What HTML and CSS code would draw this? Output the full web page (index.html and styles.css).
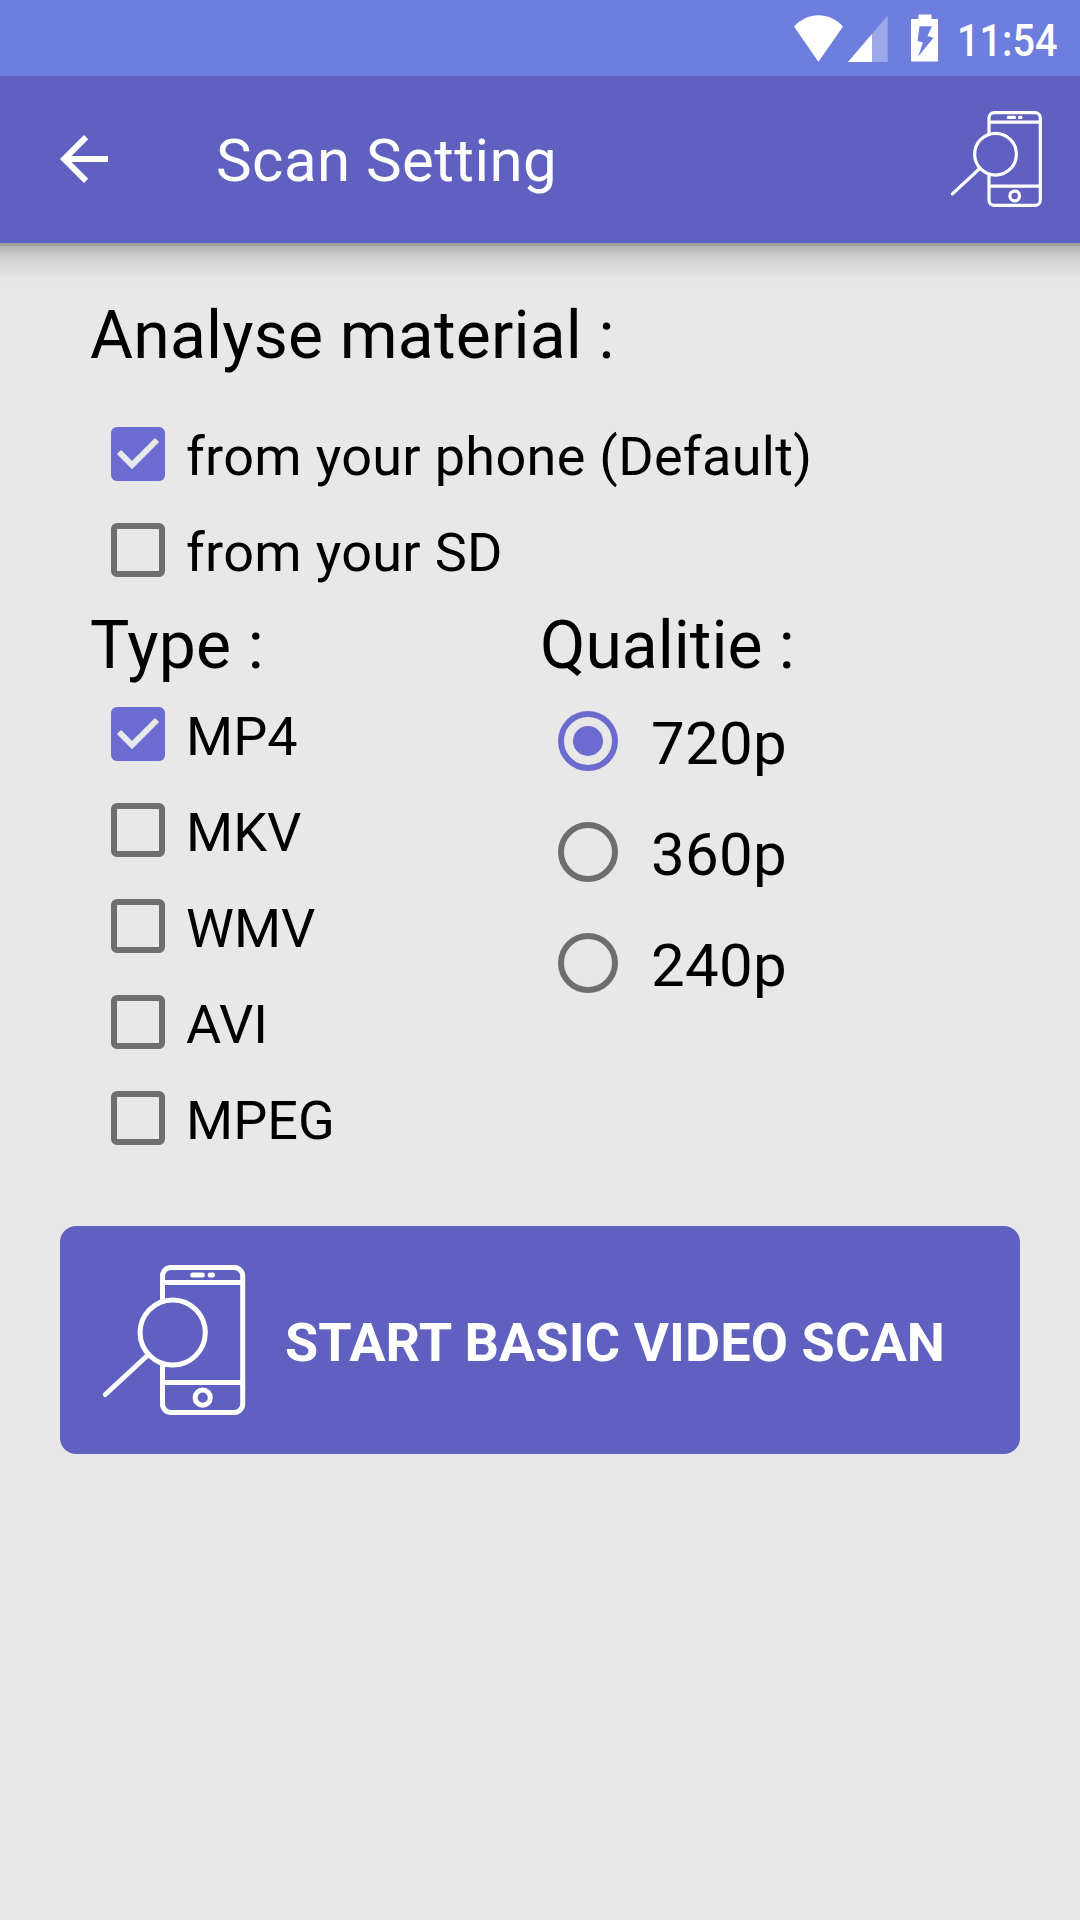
FILE: index.html
```html
<!DOCTYPE html>
<html lang="en">
<head>
<meta charset="utf-8">
<title>Scan Setting</title>
<link rel="stylesheet" href="styles.css">
</head>
<body>
<svg class="defs" width="0" height="0" aria-hidden="true">
  <symbol id="scan" viewBox="0 0 150 150">
    <g fill="none" stroke="#fff" stroke-width="5">
      <rect x="62.5" y="2.5" width="80.2" height="145" rx="8.5"/>
      <path d="M62 17.5H143M62 117.5H143"/>
      <path d="M92.7 10H102.3M110.2 10H112.5" stroke-linecap="round"/>
      <circle cx="102.7" cy="132.7" r="7.6"/>
      <circle cx="72.7" cy="67.5" r="32.6" fill="#6060c0"/>
      <path d="M48.5 89.5L5.3 129.5" stroke-linecap="round"/>
    </g>
  </symbol>
  <symbol id="check" viewBox="0 0 54 54">
    <path d="M8 25L21 38L46 13" fill="none" stroke="#e8e8e8" stroke-width="6"/>
  </symbol>
</svg>

<header class="status">
  <svg class="status-icons" width="146" height="50" viewBox="793 13 146 50">
    <path fill="#fff" d="M818.4 61.7L794 26.5C808 11.500 829 11.500 843 26.500Z"/>
    <path fill="#fff" fill-opacity=".32" d="M887.700 15.500V62H848Z"/>
    <path fill="#fff" d="M872 34V62H848Z"/>
    <path fill="#fff" fill-rule="evenodd" d="M918.500 14.500H931.500V19H938V61.500H911V19H918.500ZM919.500 26.300L917.500 41L923 42.500L918 56.800L933.500 37.800L927.500 36L932 26.300Z"/>
  </svg>
  <span class="clock">11:54</span>
</header>

<nav class="appbar">
  <svg class="back" viewBox="0 0 24 24"><path fill="#fff" d="M20 11H7.830l5.590-5.590L12 4l-8 8 8 8 1.410-1.410L7.830 13H20v-2z"/></svg>
  <h1 class="title">Scan Setting</h1>
  <svg class="scan-small"><use href="#scan"/></svg>
</nav>
<div class="shadow"></div>

<main class="content">
  <h2 class="heading spaced">Analyse material :</h2>
  <div class="checks source">
    <div class="option"><span class="box on"><svg><use href="#check"/></svg></span><span class="label">from your phone (Default)</span></div>
    <div class="option"><span class="box"></span><span class="label">from your SD</span></div>
  </div>
  <div class="columns">
    <section>
      <h2 class="heading spaced">Type :</h2>
      <div class="checks">
        <div class="option"><span class="box on"><svg><use href="#check"/></svg></span><span class="label">MP4</span></div>
        <div class="option"><span class="box"></span><span class="label">MKV</span></div>
        <div class="option"><span class="box"></span><span class="label">WMV</span></div>
        <div class="option"><span class="box"></span><span class="label">AVI</span></div>
        <div class="option"><span class="box"></span><span class="label">MPEG</span></div>
      </div>
    </section>
    <section>
      <h2 class="heading">Qualitie :</h2>
      <div class="radios">
        <div class="choice"><span class="radio on"></span><span class="value">720p</span></div>
        <div class="choice"><span class="radio"></span><span class="value">360p</span></div>
        <div class="choice"><span class="radio"></span><span class="value">240p</span></div>
      </div>
    </section>
  </div>
</main>

<button class="start" type="button">
  <svg class="scan-large"><use href="#scan"/></svg>
  <span class="start-label">START BASIC VIDEO SCAN</span>
</button>
</body>
</html>
```

FILE: styles.css
```css
* { box-sizing: border-box; }

body {
  margin: 0;
  height: 1920px;
  overflow: hidden;
  background: #e8e8e8;
  color: #000;
  font-family: Roboto, sans-serif;
}

svg { display: block; flex: none; }

.defs { position: absolute; }

.status {
  display: flex;
  align-items: flex-start;
  height: 76px;
  padding: 13px 0 0 793px;
  background: #6e7ede;
  color: #fff;
}

.clock {
  margin: 1px 0 0 18px;
  font-size: 45px;
  font-weight: 500;
  line-height: 54px;
  transform: scaleX(.88);
  transform-origin: left;
}

.appbar {
  display: flex;
  align-items: flex-start;
  height: 167px;
  padding: 0 35px 0 48px;
  background: #6060c0;
  color: #fff;
}

.back { width: 72px; height: 72px; margin-top: 47px; }

.title {
  flex: 1;
  margin: 50px 0 0 96px;
  font-size: 60px;
  font-weight: 400;
  letter-spacing: .45px;
  line-height: 70px;
}

.scan-small { width: 96px; height: 96px; margin-top: 35px; }

.shadow {
  height: 39px;
  background: linear-gradient(#a0a0a0 3px, #b7b7b7 3px, #bcbcbc 7px, #cdcdcd 13px, #d9d9d9 23px, #e3e3e3 33px, #e8e8e8 39px);
}

.content { padding: 14px 0 0 90px; }

.heading {
  margin: 0;
  font-size: 66px;
  font-weight: 400;
  line-height: 80px;
}

.heading.spaced { letter-spacing: .2px; }

.checks { padding-left: 21px; }
.source { padding-top: 30px; }

.option {
  display: flex;
  gap: 21px;
  height: 96px;
  padding-top: 21px;
}

.box {
  flex: none;
  width: 54px;
  height: 54px;
  border: 6px solid #6e6e6e;
  border-radius: 6px;
}

.box.on { border: 0; background: #6c6cd0; }
.box svg { width: 54px; height: 54px; }

.label { margin-top: -2px; font-size: 54px; line-height: 64px; }
.source .label { letter-spacing: .32px; }

.columns {
  display: grid;
  grid-template-columns: 450px 1fr;
  padding-top: 8px;
}

.radios { padding: 25px 0 0 18px; }

.choice { display: flex; gap: 33px; height: 111px; }

.radio {
  display: grid;
  place-items: center;
  flex: none;
  width: 60px;
  height: 60px;
  border: 6px solid #6e6e6e;
  border-radius: 50%;
}

.radio.on { border-color: #6c6cd0; }

.radio.on::before {
  content: "";
  width: 30px;
  height: 30px;
  border-radius: 50%;
  background: #6c6cd0;
}

.value {
  margin-top: -2px;
  font-size: 60px;
  letter-spacing: .25px;
  line-height: 70px;
}

.start {
  display: flex;
  align-items: center;
  gap: 35px;
  width: 960px;
  height: 228px;
  margin: 60px 60px 0;
  padding: 0 0 0 40px;
  border: 0;
  border-radius: 16px;
  background: #6060c0;
  color: #fff;
  font-family: inherit;
}

.scan-large { width: 150px; height: 150px; }

.start-label {
  padding-top: 6px;
  font-size: 54px;
  font-weight: 700;
  letter-spacing: .12px;
  line-height: 64px;
  white-space: nowrap;
}
```
